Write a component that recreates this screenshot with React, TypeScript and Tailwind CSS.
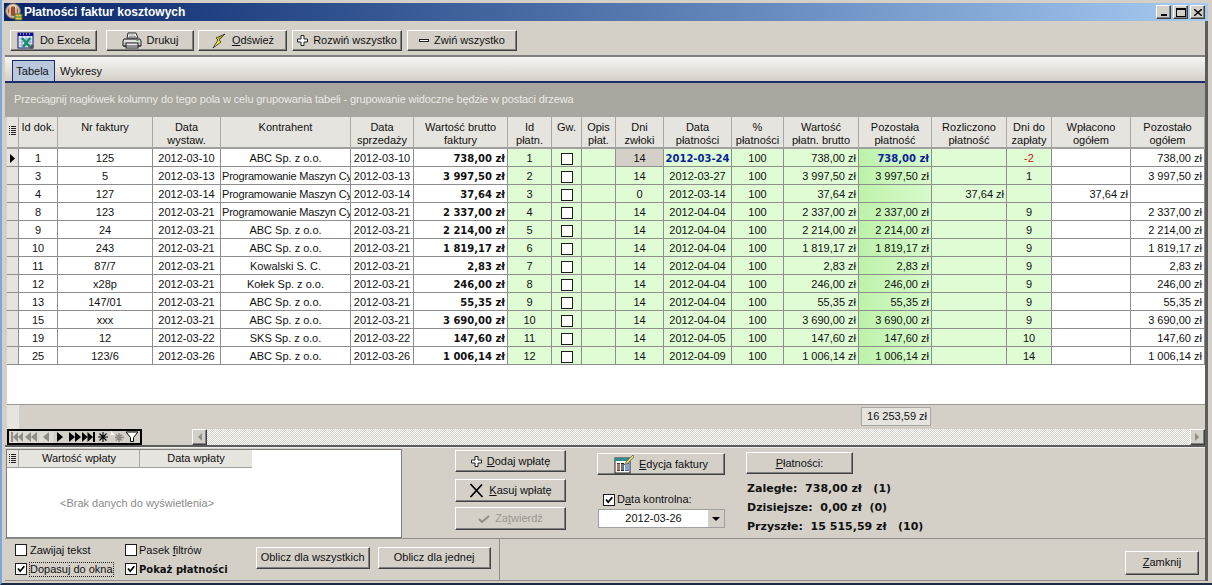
import React from "react";

const colW = ["w-[12px]","w-[39px]","w-[95px]","w-[68px]","w-[130px]","w-[63px]","w-[94px]","w-[44px]","w-[30px]","w-[34px]","w-[48px]","w-[68px]","w-[52px]","w-[75px]","w-[73px]","w-[75px]","w-[45px]","w-[79px]","w-[74px]"];
const heads = [["Id dok."],["Nr faktury"],["Data","wystaw."],["Kontrahent"],["Data","sprzedaży"],["Wartość brutto","faktury"],["Id","płatn."],["Gw."],["Opis","płat."],["Dni","zwłoki"],["Data","płatności"],["%","płatności"],["Wartość","płatn. brutto"],["Pozostała","płatność"],["Rozliczono","płatność"],["Dni do","zapłaty"],["Wpłacono","ogółem"],["Pozostało","ogółem"]];
const P = "Programowanie Maszyn Cy";
const A = "ABC Sp. z o.o.";
type R = [string,string,string,string,string,string,string,string,string,string,string,string];
const rows: R[] = [
["1","125","2012-03-10",A,"738,00 zł","1","14","2012-03-24","738,00 zł","-2","",""],
["3","5","2012-03-13",P,"3 997,50 zł","2","14","2012-03-27","3 997,50 zł","1","",""],
["4","127","2012-03-14",P,"37,64 zł","3","0","2012-03-14","37,64 zł","","37,64 zł","37,64 zł"],
["8","123","2012-03-21",P,"2 337,00 zł","4","14","2012-04-04","2 337,00 zł","9","",""],
["9","24","2012-03-21",A,"2 214,00 zł","5","14","2012-04-04","2 214,00 zł","9","",""],
["10","243","2012-03-21",A,"1 819,17 zł","6","14","2012-04-04","1 819,17 zł","9","",""],
["11","87/7","2012-03-21","Kowalski S. C.","2,83 zł","7","14","2012-04-04","2,83 zł","9","",""],
["12","x28p","2012-03-21","Kołek Sp. z o.o.","246,00 zł","8","14","2012-04-04","246,00 zł","9","",""],
["13","147/01","2012-03-21",A,"55,35 zł","9","14","2012-04-04","55,35 zł","9","",""],
["15","xxx","2012-03-21",A,"3 690,00 zł","10","14","2012-04-04","3 690,00 zł","9","",""],
["19","12","2012-03-22","SKS Sp. z o.o.","147,60 zł","11","14","2012-04-05","147,60 zł","10","",""],
["25","123/6","2012-03-26",A,"1 006,14 zł","12","14","2012-04-09","1 006,14 zł","14","",""],
];

const raised = "border border-t-white border-l-white border-r-[#404040] border-b-[#404040] shadow-[inset_-1px_-1px_0_#808080] bg-[#d4d0c8]";
const bold = "font-['DejaVu_Sans',sans-serif] font-bold text-[10px]";
const boldLarge = "font-['DejaVu_Sans',sans-serif] font-bold text-[11px] leading-[14px]";

const Btn = ({ className = "", children, disabled }: { className?: string; children: React.ReactNode; disabled?: boolean }) => (
  <button className={`flex items-center justify-center gap-[5px] ${raised} ${disabled ? "text-[#9a978f]" : "text-[#111]"} ${className}`}>{children}</button>
);

const Check = ({ on, className = "" }: { on?: boolean; className?: string }) => (
  <span className={`inline-block w-[12px] h-[12px] border border-[#1c1c1c] bg-white shrink-0 ${className}`}>
    {on && (
      <svg viewBox="0 0 10 10" className="w-[10px] h-[10px]"><path d="M2 4.500 L4.200 7.200 L8.300 2.200" fill="none" stroke="#000" strokeWidth="1.800" /></svg>
    )}
  </span>
);

const Plus = () => (
  <svg viewBox="0 0 11 11" className="w-[11px] h-[11px]"><path d="M4 .5h3v3.5h3.5v3H7v3.5H4V7H.5V4H4z" fill="#fff" stroke="#222" /></svg>
);

const ExcelIcon = () => (
  <svg viewBox="0 0 18 18" className="w-[18px] h-[18px]">
    <rect x="1" y="1" width="15" height="15" fill="#e8eefc" stroke="#10106a" />
    <rect x="1" y="1" width="15" height="3" fill="#10108a" />
    <path d="M3 2h1M6 2h1M9 2h1M12 2h1" stroke="#fff" />
    <path d="M1 7h15M1 10h15M1 13h15M5 4v12M9 4v12M13 4v12" stroke="#7f8fc0" strokeWidth=".7" />
    <path d="M5 6l8 9M13 6l-7 9" stroke="#0f8f6a" strokeWidth="2.400" />
    <path d="M15 12l2 2-2 3-3-1z" fill="#555" />
  </svg>
);
const PrintIcon = () => (
  <svg viewBox="0 0 20 18" className="w-[20px] h-[18px]">
    <path d="M6 1h8l2 5H5z" fill="#fff" stroke="#222" />
    <path d="M7 3h6M7 4.500h7" stroke="#777" strokeWidth=".7" />
    <path d="M2 7h16l1 2v5H1V9z" fill="#c4c4c4" stroke="#222" />
    <path d="M2 9h16" stroke="#fff" />
    <rect x="4" y="11" width="12" height="5" fill="#eee" stroke="#222" />
    <path d="M1 14h18" stroke="#333" />
    <rect x="14.500" y="8" width="2" height="1" fill="#2a2" />
  </svg>
);
const Bolt = () => (
  <svg viewBox="0 0 16 16" className="w-[16px] h-[16px]">
    <path d="M14 1 L5 5 L7 7 L2 15 L10 9 L8 7 Z" fill="#f4ee30" stroke="#222" strokeWidth=".8" />
    <path d="M11 3 L7 6" stroke="#6a6a10" strokeWidth=".8" />
  </svg>
);
const EditIcon = () => (
  <svg viewBox="0 0 20 20" className="w-[20px] h-[20px]">
    <rect x="1" y="4" width="15" height="15" fill="#fff" stroke="#222" />
    <rect x="1" y="4" width="15" height="3" fill="#2f8f8f" />
    <rect x="3" y="9" width="3" height="8" fill="#7a2f20" />
    <rect x="7" y="9" width="3" height="8" fill="#222" />
    <rect x="11" y="9" width="4" height="8" fill="#4070c0" />
    <path d="M3 11h12M3 13h12M3 15h12" stroke="#fff" strokeWidth=".7" />
    <path d="M19 1 L12 8 L10 11 L14 9 L20 3 Z" fill="#f0e060" stroke="#555" strokeWidth=".7" />
  </svg>
);
const XIcon = () => (
  <svg viewBox="0 0 15 15" className="w-[15px] h-[15px]"><path d="M1.500 1 L13.500 14 M13 1.500 L1.500 14" stroke="#000" strokeWidth="1.700" /></svg>
);
const AppIcon = () => (
  <svg viewBox="0 0 18 18" className="w-[18px] h-[18px] shrink-0">
    <circle cx="8" cy="8" r="7.500" fill="#c8b8a8" stroke="#6a5a50" />
    <circle cx="8" cy="8" r="5" fill="#a04a30" />
    <path d="M5 12V5.500a3 3 0 0 1 6 0V12" fill="none" stroke="#e8d8c0" strokeWidth="1.500" />
    <rect x="10" y="11" width="7" height="6" fill="#e8c040" stroke="#3a6a3a" />
    <path d="M10 14h7" stroke="#3a8a3a" />
  </svg>
);
const RowsIcon = () => (
  <svg viewBox="0 0 7 9" className="w-[7px] h-[9px] mx-auto">
    <path d="M0 .5h1M2 .5h5M0 2.500h1M2 2.500h5M0 4.500h1M2 4.500h5M0 6.500h1M2 6.500h5M0 8.500h1M2 8.500h5" stroke="#222" />
  </svg>
);

const NavBtn = ({ d, grey }: { d: string; grey?: boolean }) => (
  <svg viewBox="0 0 14 12" className={`w-[14px] h-[12px] ${grey ? "text-[#8f8d86] bg-[#dedbd4]" : "text-black"}`}>
    <path d={d} fill="currentColor" />
  </svg>
);

const Nav = () => (
  <div className="flex items-center h-[16px] w-[135px] border-2 border-black pl-[1px] gap-[.4px] bg-[#d4d0c8]">
    <NavBtn grey d="M1 1h2v10H1zM3 6l5-5v10zM8 6l5-5v10z" />
    <NavBtn grey d="M1 6l6-5v10zM7 6l6-5v10z" />
    <NavBtn grey d="M4 6l6-5v10z" />
    <NavBtn d="M4 1l6 5-6 5z" />
    <NavBtn d="M1 1l6 5-6 5zM7 1l6 5-6 5z" />
    <NavBtn d="M0 1l5.500 5-5.500 5zM5.500 1l5.500 5-5.500 5zM11 1h2v10h-2z" />
    <svg viewBox="0 0 14 12" className="w-[14px] h-[12px]"><path d="M7 1v10M2 6h10M3.500 2.500l7 7M10.500 2.500l-7 7" stroke="#000" strokeWidth="1.100" /></svg>
    <svg viewBox="0 0 14 12" className="w-[14px] h-[12px]"><path d="M8 2v9M4 6.500h9M5 3.500l6 6M11 3.500l-6 6" stroke="#8f8d86" strokeWidth="1.600" /><path d="M0 0l4 4H0z" fill="#fff" /></svg>
    <svg viewBox="0 0 14 12" className="w-[14px] h-[12px]"><path d="M1 1h12L8.500 6.500V10.500h-3V6.500z" fill="#fff" stroke="#000" /></svg>
  </div>
);

const ScrollBtn = ({ right }: { right?: boolean }) => (
  <button className={`w-[15px] h-[16px] flex items-center justify-center ${raised}`}>
    <svg viewBox="0 0 5 8" className="w-[5px] h-[8px]"><path d={right ? "M0 0l4 4-4 4z" : "M5 0L1 4l4 4z"} fill="#8f8d86" /></svg>
  </button>
);

export default function App() {
  return (
    <div className="w-[1212px] h-[585px] overflow-hidden flex flex-col bg-[#d4d0c8] border-l-2 border-l-[#7da6dc] border-b-2 border-b-[#1c2a44] pr-[4px] pb-[2px] text-[11px] leading-[13px] text-[#111] font-['Liberation_Sans',sans-serif]">
      {/* title */}
      <div className="mt-[3px] ml-[2px] h-[18px] shrink-0 flex items-center bg-gradient-to-r from-[#0a246a] to-[#a6caf0] pl-[1px] pr-[3px]">
        <AppIcon />
        <span className="ml-[1px] text-white font-bold text-[12px]">Płatności faktur kosztowych</span>
        <div className="ml-auto flex">
          <button className={`w-[15px] h-[14px] ${raised} flex items-end justify-center pb-[2px]`}><span className="block w-[6px] h-[2px] bg-black" /></button>
          <button className={`w-[15px] h-[14px] ml-[2px] ${raised} flex items-center justify-center`}><span className="block w-[10px] h-[9px] border border-black border-t-2" /></button>
          <button className={`w-[15px] h-[14px] ml-[2px] ${raised} flex items-center justify-center`}>
            <svg viewBox="0 0 8 7" className="w-[8px] h-[7px]"><path d="M0 0l8 7M8 0L0 7" stroke="#000" strokeWidth="1.400" /></svg>
          </button>
        </div>
      </div>
      {/* client */}
      <div className="ml-[3px] flex-1 min-h-0 flex flex-col border-r-[3px] border-r-[#5c5c5c]">
        {/* toolbar */}
        <div className="h-[36px] shrink-0 flex pt-[9px] pl-[5px] border-b-2 border-b-[#808080]">
          <Btn className="w-[87px] h-[21px]"><ExcelIcon /><span>Do Excela</span></Btn>
          <Btn className="w-[88px] h-[21px] ml-[9px]"><PrintIcon /><span>Drukuj</span></Btn>
          <Btn className="w-[89px] h-[21px] ml-[4px]"><Bolt /><span><u>O</u>dśwież</span></Btn>
          <Btn className="w-[110px] h-[21px] ml-[5px]"><Plus /><span>Rozwiń wszystko</span></Btn>
          <Btn className="w-[110px] h-[21px] ml-[5px]"><span className="block w-[10px] h-[3px] bg-white border border-[#222]" /><span>Zwiń wszystko</span></Btn>
        </div>
        {/* tabs */}
        <div className="h-[26px] shrink-0 flex items-end pl-[7px] bg-gradient-to-b from-[#f6f5f2] to-[#d4d0c8] border-b-2 border-b-[#1a2f6a]">
          <div className="w-[43px] h-[21px] flex items-center justify-center bg-[#b9c8dc] border border-b-0 border-[#1a2f6a] pr-[2px]">Tabela</div>
          <div className="ml-[5px] h-[20px] flex items-center">Wykresy</div>
        </div>
        {/* group bar */}
        <div className="h-[34px] shrink-0 flex items-center pl-[9px] pb-[2px] bg-[#a8a69f] text-[#ebebe6] tracking-[-0.12px]">
          Przeciągnij nagłówek kolumny do tego pola w celu grupowania tabeli - grupowanie widoczne będzie w postaci drzewa
        </div>
        {/* grid */}
        <div className="ml-[2px] flex-1 min-h-0 flex flex-col">
          <div className="flex-1 min-h-0 bg-white overflow-hidden">
            <table className="table-fixed border-separate border-spacing-0 w-[1198px]">
              <colgroup>{colW.map((c, i) => <col key={i} className={c} />)}</colgroup>
              <thead>
                <tr>
                  <th className="h-[31px] p-0 bg-[#e6e4de] border-r border-b-2 border-r-[#a9a7a0] border-b-[#a0a0a0] align-top pt-[9px]"><RowsIcon /></th>
                  {heads.map((h, i) => (
                    <th key={i} className="h-[31px] p-0 pt-[4px] align-top font-normal bg-[#e6e4de] border-r border-b-2 border-r-[#a9a7a0] border-b-[#a0a0a0] text-center whitespace-nowrap overflow-hidden">
                      {h.map((t) => <div key={t}>{t}</div>)}
                    </th>
                  ))}
                </tr>
              </thead>
              <tbody>
                {rows.map((r, i) => {
                  const td = "h-[18px] p-0 pt-[1px] border-r border-b border-[#8e8e8e] whitespace-nowrap overflow-hidden";
                  const g = `${td} bg-[#dffcd5] text-center`;
                  const first = i === 0;
                  return (
                    <tr key={i}>
                      <td className={`${td} bg-[#e6e4de] text-center`}>
                        {first && <svg viewBox="0 0 5 9" className="w-[5px] h-[9px] mx-auto"><path d="M0 0l5 4.500-5 4.500z" fill="#000" /></svg>}
                      </td>
                      <td className={`${td} text-center`}>{r[0]}</td>
                      <td className={`${td} text-center`}>{r[1]}</td>
                      <td className={`${td} text-center`}>{r[2]}</td>
                      <td className={`${td} ${r[3] === P ? "text-left pl-[1px] tracking-[-0.2px]" : "text-center"}`}>{r[3]}</td>
                      <td className={`${td} text-center`}>{r[2]}</td>
                      <td className={`${td} text-right pr-[2px] ${bold}`}>{r[4]}</td>
                      <td className={g}>{r[5]}</td>
                      <td className={g}><Check className="align-middle" /></td>
                      <td className={g}></td>
                      <td className={`${td} text-center ${first ? "bg-[#d4d0c8]" : "bg-[#dffcd5]"}`}>{r[6]}</td>
                      <td className={first ? `${td} bg-[#dffcd5] text-center text-[#0a1f9a] ${bold}` : g}>{r[7]}</td>
                      <td className={g}>100</td>
                      <td className={`${td} bg-[#dffcd5] text-right pr-[2px]`}>{r[8]}</td>
                      <td className={`${td} text-right pr-[2px] bg-gradient-to-r from-[#bdf2ab] to-[#d8fbcc] ${first ? `text-[#0a1f9a] ${bold}` : ""}`}>{i === 2 ? "" : r[8]}</td>
                      <td className={`${td} bg-[#dffcd5] text-right pr-[2px]`}>{r[10]}</td>
                      <td className={`${g} ${first ? "text-[#c02010]" : ""}`}>{r[9]}</td>
                      <td className={`${td} text-right pr-[2px]`}>{r[11]}</td>
                      <td className={`${td} text-right pr-[2px]`}>{i === 2 ? "" : r[8]}</td>
                    </tr>
                  );
                })}
              </tbody>
            </table>
          </div>
          {/* footer */}
          <div className="h-[25px] shrink-0 flex border-t border-[#9a9a94]">
            <div className="w-[12px] bg-[#e6e4de]" />
            <div className="ml-[842px] mt-[2px] w-[70px] h-[19px] flex items-center justify-end pr-[3px] bg-[#e6e4de] border border-[#a9a7a0]">16 253,59 zł</div>
          </div>
          {/* nav + scroll */}
          <div className="h-[16px] shrink-0 flex">
            <Nav />
            <div className="w-[50px]" />
            <ScrollBtn />
            <div className="flex-1 bg-[repeating-conic-gradient(#d4d0c8_0_25%,#ffffff_0_50%)] bg-size-[2px_2px]" />
            <ScrollBtn right />
          </div>
        </div>
        <div className="h-[3px] shrink-0 border-t-2 border-t-[#5c5c5c] border-b border-b-[#eeeeea]" />
        {/* lower panel */}
        <div className="h-[90px] shrink-0 flex">
          <div className="ml-[1px] mt-[1px] w-[396px] h-[89px] bg-white border border-[#808080] flex flex-col">
            <div className="flex h-[18px] w-[245px] bg-[#e6e4de] border-b border-[#a0a0a0] items-center">
              <div className="w-[12px] border-r border-[#a9a7a0] h-full flex items-center"><RowsIcon /></div>
              <div className="w-[121px] text-center border-r border-[#a9a7a0] h-full flex items-center justify-center">Wartość wpłaty</div>
              <div className="flex-1 text-center">Data wpłaty</div>
            </div>
            <div className="ml-[53px] mt-[29px] text-[#8a8a8a]">&lt;Brak danych do wyświetlenia&gt;</div>
          </div>
          <div className="ml-[53px] pt-[2px] flex flex-col">
            <Btn className="w-[111px] h-[22px]"><Plus /><span><u>D</u>odaj wpłatę</span></Btn>
            <Btn className="w-[111px] h-[23px] mt-[7px]"><XIcon /><span><u>K</u>asuj wpłatę</span></Btn>
            <Btn disabled className="w-[111px] h-[23px] mt-[5px]">
              <svg viewBox="0 0 12 10" className="w-[12px] h-[10px]"><path d="M1 5l3 3 7-6" fill="none" stroke="#8f8d86" strokeWidth="2" /></svg>
              <span>Za<u>t</u>wierdź</span>
            </Btn>
          </div>
          <div className="ml-[31px] pt-[5px] flex flex-col">
            <Btn className="w-[128px] h-[22px]"><EditIcon /><span><u>E</u>dycja faktury</span></Btn>
            <div className="mt-[18px] ml-[6px] flex items-center gap-[2px]"><Check on /><span>D<u>a</u>ta kontrolna:</span></div>
            <div className="mt-[3px] ml-[1px] w-[127px] h-[19px] bg-white border border-[#a0a0a0] flex items-center">
              <span className="flex-1 text-center">2012-03-26</span>
              <span className="w-[16px] h-full bg-[#d4d0c8] flex items-center justify-center"><svg viewBox="0 0 8 4" className="w-[8px] h-[4px]"><path d="M0 0h8L4 4z" fill="#000" /></svg></span>
            </div>
          </div>
          <div className="ml-[21px] pt-[4px] flex flex-col">
            <Btn className="w-[107px] h-[22px]"><span><u>P</u>łatności:</span></Btn>
            <div className={`${boldLarge} mt-[8px] ml-[1px] flex flex-col gap-[5px]`}>
              <div className="whitespace-pre">Zaległe:  738,00 zł   (1)</div>
              <div className="whitespace-pre">Dzisiejsze:  0,00 zł  (0)</div>
              <div className="whitespace-pre">Przyszłe:  15 515,59 zł   (10)</div>
            </div>
          </div>
        </div>
        {/* bottom */}
        <div className="h-[43px] shrink-0 flex border-t border-t-[#908e88] border-b border-b-[#908e88]">
          <div className="w-[495px] pl-[10px] flex items-center border-r border-r-[#908e88]">
            <div className="grid grid-cols-[110px_auto] gap-y-[6px]">
              <div className="flex items-center gap-[3px]"><Check /><span>Zawijaj tekst</span></div>
              <div className="flex items-center gap-[2px]"><Check /><span>Pasek <u>f</u>iltrów</span></div>
              <div className="flex items-center gap-[3px]"><Check on /><span className="outline-1 outline-dotted outline-[#222]">Dopasuj do okna</span></div>
              <div className="flex items-center gap-[2px]"><Check on /><span className={bold}>Pokaż płatności</span></div>
            </div>
            <Btn className="w-[114px] h-[22px] ml-[28px] mb-[4px]"><span>Oblicz dla wszystkich</span></Btn>
            <Btn className="w-[113px] h-[22px] ml-[8px] mb-[4px]"><span>Oblicz dla jednej</span></Btn>
          </div>
          <div className="flex-1 flex justify-end items-center pr-[6px]">
            <Btn className="w-[74px] h-[24px] mt-[6px]"><span><u>Z</u>amknij</span></Btn>
          </div>
        </div>
      </div>
    </div>
  );
}
